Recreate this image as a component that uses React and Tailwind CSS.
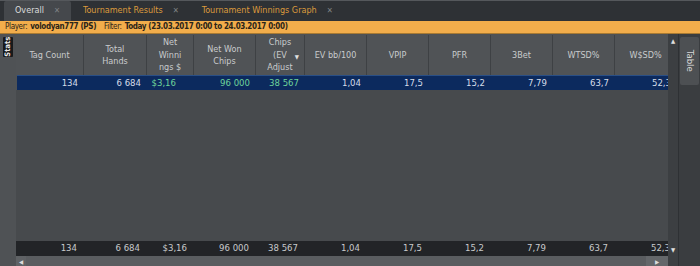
import React from 'react';

const font = { fontFamily: "'Liberation Sans Narrow', 'DejaVu Sans Condensed', 'Liberation Sans', sans-serif" };

const columns = [
  { w: 'w-[68px]', label: ['Tag Count'], top: '134', bottom: '134' },
  { w: 'w-[63px]', label: ['Total', 'Hands'], top: '6 684', bottom: '6 684' },
  { w: 'w-[47px]', label: ['Net', 'Winni', 'ngs $'], top: '$3,16', bottom: '$3,16', green: true },
  { w: 'w-[62px]', label: ['Net Won', 'Chips'], top: '96 000', bottom: '96 000', green: true },
  { w: 'w-[49px]', label: ['Chips', '(EV', 'Adjust'], top: '38 567', bottom: '38 567', green: true, sort: true },
  { w: 'w-[62px]', label: ['EV bb/100'], top: '1,04', bottom: '1,04' },
  { w: 'w-[62px]', label: ['VPIP'], top: '17,5', bottom: '17,5' },
  { w: 'w-[62px]', label: ['PFR'], top: '15,2', bottom: '15,2' },
  { w: 'w-[62px]', label: ['3Bet'], top: '7,79', bottom: '7,79' },
  { w: 'w-[62px]', label: ['WTSD%'], top: '63,7', bottom: '63,7' },
  { w: 'w-[62px]', label: ['W$SD%'], top: '52,3', bottom: '52,3' },
];

function Tab({ label, active }) {
  return (
    <div
      className={
        'flex items-center gap-[10px] h-full px-[11px] text-[9px] ' +
        (active ? 'bg-[#45484c] text-[#dcdcdc] rounded-t-[2px]' : 'text-[#dc9a3c]')
      }
    >
      <span>{label}</span>
      <span className="text-[#7e8184] text-[8px]">✕</span>
    </div>
  );
}

export default function App() {
  return (
    <div className="w-[700px] h-[266px] flex flex-col bg-[#4f5255] overflow-hidden" style={font}>
      {/* tabs */}
      <div className="h-[21px] flex items-end bg-[#2e3135] border-t border-[#55585c] pl-[4px] gap-[1px]">
        <Tab label="Overall" active />
        <Tab label="Tournament Results" />
        <Tab label="Tournament Winnings Graph" />
      </div>

      {/* filter */}
      <div className="h-[13px] flex items-center bg-[#f2ad4b] border-b border-[#a87a33] px-[5px] text-[8px] tracking-[-0.35px] text-[#2a2418] gap-[3px] leading-none">
        <span>Player:</span>
        <b>volodyan777 (PS)</b>
        <span className="ml-[5px]">Filter:</span>
        <b>Today (23.03.2017 0:00 to 24.03.2017 0:00)</b>
      </div>

      <div className="flex-1 flex min-h-0">
        {/* left dock */}
        <div className="w-[16px] pt-[3px] flex justify-center">
          <div className="w-[10px] h-[20px] bg-[#18191b] rounded-[1px] flex items-center justify-center">
            <span className="-rotate-90 text-[7.5px] text-[#e8e8e8] font-bold leading-none">Stats</span>
          </div>
        </div>

        {/* grid */}
        <div className="w-[652px] flex flex-col">
          <div className="h-[40px] mt-[1px] flex overflow-hidden bg-[#505356]">
            {columns.map((c, i) => (
              <div
                key={i}
                className={c.w + ' shrink-0 relative flex flex-col items-center justify-center border-r border-[#3e4144] text-[9px] leading-[12.5px] text-[#c9cbcd]'}
              >
                {c.label.map((l, j) => (
                  <span key={j} className="whitespace-nowrap">{l}</span>
                ))}
                {c.sort && <span className="absolute right-[5px] top-[16px] text-[6px] text-[#e0e0e0]">▼</span>}
              </div>
            ))}
          </div>

          <div className="h-[15px] flex overflow-hidden bg-[#0c2a5e] border-t border-[#2a4f86] ml-[1px]">
            {columns.map((c, i) => (
              <div
                key={i}
                className={
                  c.w +
                  ' shrink-0 flex items-center justify-end pr-[7px] text-[9.5px] whitespace-nowrap ' +
                  (c.green ? 'text-[#6fd49a]' : 'text-[#d6dde9]') +
                  (i === 2 ? ' pr-[19px]' : '')
                }
              >
                {c.top}
              </div>
            ))}
          </div>

          <div className="flex-1 bg-[#474a4d]" />

          <div className="h-[15px] flex overflow-hidden bg-[#222427]">
            {columns.map((c, i) => (
              <div
                key={i}
                className={c.w + ' shrink-0 flex items-center justify-end pr-[7px] text-[9.5px] text-[#c8cacc] whitespace-nowrap'}
              >
                {c.bottom}
              </div>
            ))}
          </div>

          <div className="h-[10px] flex bg-[#55585b]">
            <div className="w-[10px] flex items-center justify-center bg-[#5f6265] text-[6px] text-[#dcdcdc]">◀</div>
            <div className="flex-1 bg-[#5a5d60]" />
            <div className="w-[22px] flex items-center justify-center bg-[#64676a] text-[6px] text-[#dcdcdc]">▶</div>
          </div>
        </div>

        {/* vertical scrollbar */}
        <div className="w-[10px] flex flex-col bg-[#3c3f42]">
          <div className="h-[9px] mt-[2px] flex items-center justify-center text-[6px] text-[#e0e0e0]">▲</div>
          <div className="flex-1" />
          <div className="h-[9px] mb-[12px] flex items-center justify-center text-[6px] text-[#e0e0e0]">▼</div>
        </div>

        {/* right dock */}
        <div className="w-[22px] bg-[#3a3d40] border-l border-[#2e3134] pt-[3px] flex justify-center">
          <div className="w-[19px] h-[48px] bg-[#4d5053] rounded-[2px] flex items-center justify-center">
            <span className="rotate-90 text-[9.5px] text-[#d8d8d8] leading-none">Table</span>
          </div>
        </div>
      </div>
    </div>
  );
}
